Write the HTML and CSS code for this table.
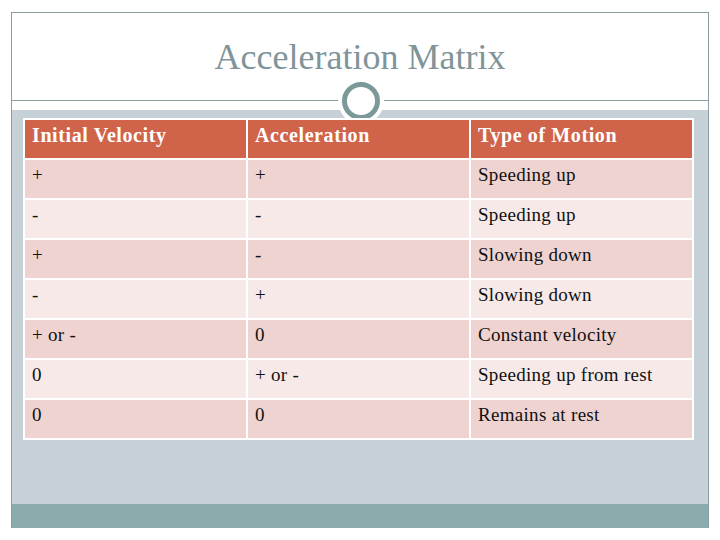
FILE: index.html
```html
<!DOCTYPE html>
<html>
<head>
<meta charset="utf-8">
<link rel="stylesheet" href="styles.css">
</head>
<body>
<div class="slide">
  <div class="head"><h1 class="title">Acceleration Matrix</h1></div>
  <div class="divider"><span class="notch"></span><span class="ring"></span></div>
  <div class="content">
    <table class="matrix">
      <thead>
        <tr><th>Initial Velocity</th><th>Acceleration</th><th>Type of Motion</th></tr>
      </thead>
      <tbody>
        <tr><td>+</td><td>+</td><td>Speeding up</td></tr>
        <tr><td>-</td><td>-</td><td>Speeding up</td></tr>
        <tr><td>+</td><td>-</td><td>Slowing down</td></tr>
        <tr><td>-</td><td>+</td><td>Slowing down</td></tr>
        <tr><td>+ or -</td><td>0</td><td>Constant velocity</td></tr>
        <tr><td>0</td><td>+ or -</td><td>Speeding up from rest</td></tr>
        <tr><td>0</td><td>0</td><td>Remains at rest</td></tr>
      </tbody>
    </table>
  </div>
  <div class="footer"></div>
</div>
</body>
</html>
```
FILE: styles.css
```css
html, body {
  margin: 0;
  padding: 0;
  background: #ffffff;
}
.slide {
  box-sizing: border-box;
  width: 698px;
  height: 516px;
  margin: 12px 0 0 11px;
  border: 1px solid #8d9ea3;
  border-bottom: none;
  display: flex;
  flex-direction: column;
}
.head {
  height: 87px;
  display: flex;
  justify-content: center;
}
.title {
  margin: 25px 0 0 0;
  font-family: "Liberation Serif", serif;
  font-weight: normal;
  font-size: 36px;
  line-height: 38px;
  color: #7f9599;
}
.divider {
  position: relative;
  height: 9px;
  border-top: 1px solid #8d9ea3;
}
.ring {
  position: absolute;
  left: 330px;
  top: -19px;
  width: 28px;
  height: 28px;
  border: 5px solid #7b9999;
  border-radius: 50%;
  background: #ffffff;
  box-shadow: 0 0 0 4px #ffffff;
  z-index: 2;
}
.notch {
  position: absolute;
  left: 322px;
  top: 0;
  width: 54px;
  height: 14px;
  background: #ffffff;
  clip-path: polygon(0 0, 100% 0, 78% 100%, 22% 100%);
  z-index: 1;
}
.content {
  flex: 1;
  background: #c5d1d7;
  padding: 8px 14px 0 11px;
}
.matrix {
  position: relative;
  z-index: 3;
  width: 671px;
  border-collapse: collapse;
  font-family: "Liberation Serif", serif;
  font-size: 19px;
  line-height: 22px;
  letter-spacing: 0.3px;
  color: #111111;
}
.matrix th,
.matrix td {
  border: 2px solid #ffffff;
  height: 40px;
  box-sizing: border-box;
  padding: 4px 7px 0 7px;
  text-align: left;
  vertical-align: top;
  width: 33.3%;
}
.matrix th {
  background: #d0644b;
  color: #ffffff;
  font-weight: bold;
  font-size: 20px;
  letter-spacing: 0.6px;
}
.matrix tbody tr:nth-child(odd) td {
  background: #efd3d0;
}
.matrix tbody tr:nth-child(even) td {
  background: #f7e9e8;
}
.footer {
  height: 24px;
  background: #8aacad;
}
```
